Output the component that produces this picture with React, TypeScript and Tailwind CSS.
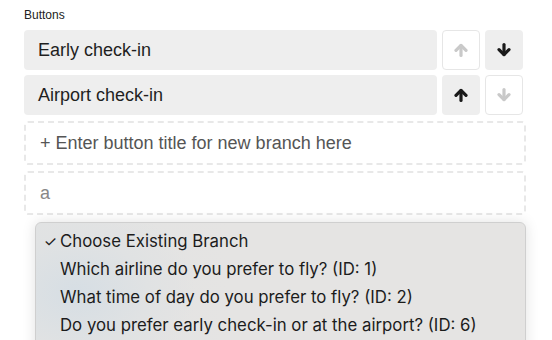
const rows = [
  { title: 'Early check-in', up: false, down: true },
  { title: 'Airport check-in', up: true, down: false },
];

const options = [
  'Which airline do you prefer to fly? (ID: 1)',
  'What time of day do you prefer to fly? (ID: 2)',
  'Do you prefer early check-in or at the airport? (ID: 6)',
];

const Arrow = ({ dir }: { dir: 'up' | 'down' }) => (
  <svg
    width="14"
    height="14"
    viewBox="0 0 14 14"
    fill="none"
    stroke="currentColor"
    strokeWidth="3.2"
    strokeLinecap="round"
    strokeLinejoin="round"
    className={dir === 'down' ? 'rotate-180' : ''}
  >
    <path d="M7 12.4V2.6" />
    <path d="M2 7.4L7 2.4L12 7.4" />
  </svg>
);

const MoveButton = ({ dir, enabled }: { dir: 'up' | 'down'; enabled: boolean }) => (
  <button
    className={
      enabled
        ? 'w-[38px] h-[40px] flex items-center justify-center rounded-[4px] bg-[#eeeeee] text-[#1a1a1a]'
        : 'w-[38px] h-[40px] flex items-center justify-center rounded-[4px] bg-white border border-[#e6e6e6] text-[#c9c9c9]'
    }
  >
    <Arrow dir={dir} />
  </button>
);

export default function App() {
  return (
    <div className="w-[552px] h-[340px] overflow-hidden bg-white pl-[24px] pr-[26px] pt-[7px] font-[family-name:'Liberation_Sans',Arial,sans-serif]">
      <div className="text-[12px] leading-[16px] text-[#222]">Buttons</div>

      <div className="mt-[7px] flex flex-col gap-[5px] pr-[3px]">
        {rows.map((r) => (
          <div key={r.title} className="flex gap-[5px]">
            <div className="flex-1 h-[40px] rounded-[4px] bg-[#eeeeee] flex items-center pl-[14px] text-[18px] text-[#1f1f1f]">
              {r.title}
            </div>
            <MoveButton dir="up" enabled={r.up} />
            <MoveButton dir="down" enabled={r.down} />
          </div>
        ))}
      </div>

      <div className="mt-[6px] h-[44px] rounded-[4px] border-2 border-dashed border-[#e8e8e8] flex items-center pl-[14px] text-[18px] text-[#555]">
        + Enter button title for new branch here
      </div>
      <div className="mt-[6px] h-[44px] rounded-[4px] border-2 border-dashed border-[#e8e8e8] flex items-center pl-[14px] text-[18px] text-[#888]">
        a
      </div>

      <div className="ml-[11px] mt-[7px] h-[140px] rounded-t-[6px] border border-[#cfcfcf] bg-[radial-gradient(ellipse_120px_90px_at_40px_70px,#d6dee4_0%,#e0e2e3_60%,transparent_100%),linear-gradient(90deg,#e2e3e3_0%,#e5e4e3_40%,#e5e4e3_100%)] shadow-[0_0_14px_rgba(0,0,0,0.12)] pt-[5px] font-[family-name:Inter,sans-serif] text-[16.8px] text-[#1c1c1c]">
        <div className="h-[28px] flex items-center">
          <span className="w-[24px] text-right pr-[3px] text-[15px]">✓</span>
          <span>Choose Existing Branch</span>
        </div>
        {options.map((o) => (
          <div key={o} className="h-[28px] flex items-center pl-[24px]">
            {o}
          </div>
        ))}
      </div>
    </div>
  );
}
